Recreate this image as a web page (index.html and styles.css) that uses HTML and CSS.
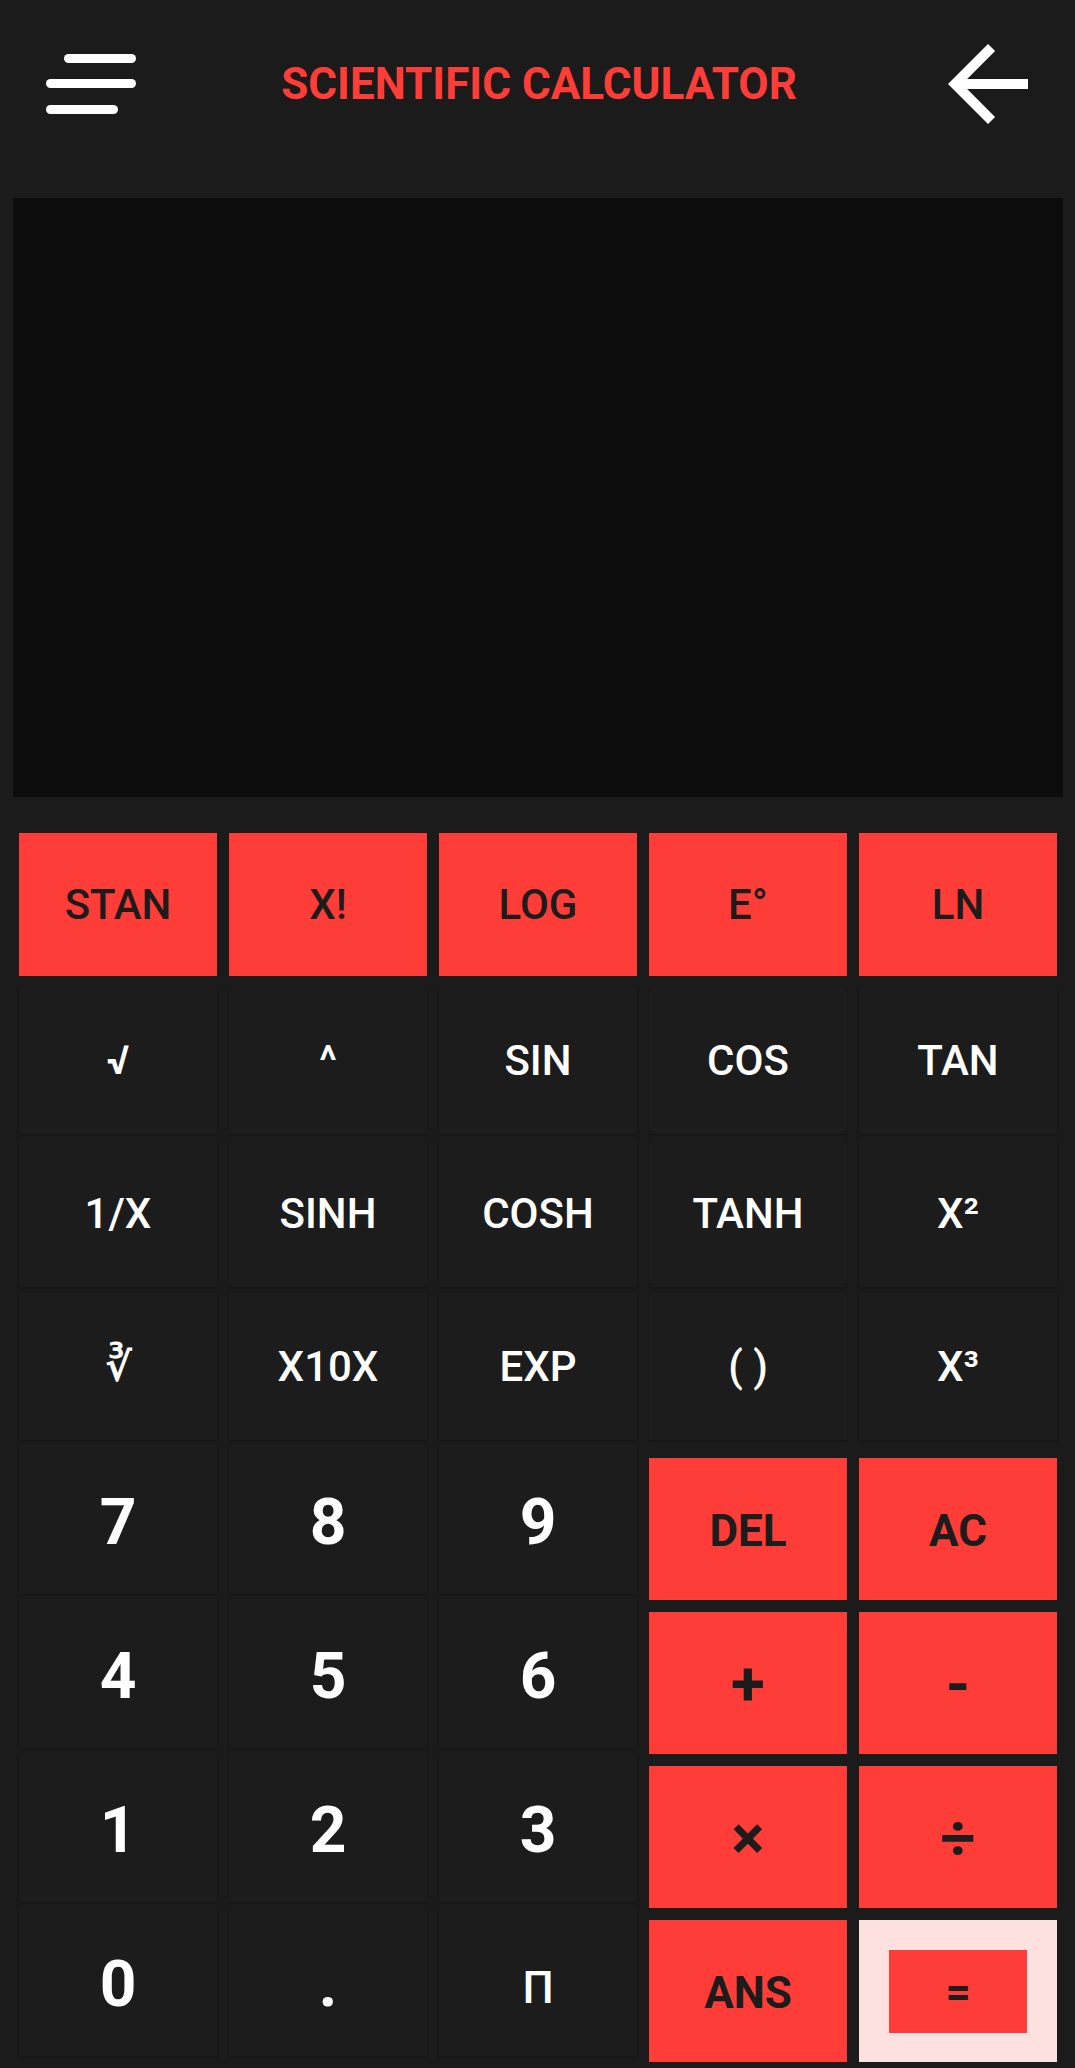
FILE: index.html
```html
<!DOCTYPE html>
<html>
<head>
    <title>Scientific Calculator</title>
    <link rel="stylesheet" href="styles.css">
</head>
<body>
    <div class="app">
        <div class="topbar">
            <svg class="menu-icon" width="90" height="60" viewBox="0 0 90 60">
                <g stroke="#fff" stroke-width="9" stroke-linecap="round">
                    <line x1="22.5" y1="4.5" x2="85.5" y2="4.5"/>
                    <line x1="4.5" y1="29.5" x2="85.5" y2="29.5"/>
                    <line x1="4.5" y1="55.5" x2="67.5" y2="55.5"/>
                </g>
            </svg>
            <div class="title">SCIENTIFIC CALCULATOR</div>
            <svg class="back-icon" width="80" height="80" viewBox="4 4 16 16">
                <path fill="#fff" d="M20 11H7.83l5.59-5.59L12 4l-8 8 8 8 1.41-1.41L7.83 13H20v-2z"/>
            </svg>
        </div>

        <div class="screen" id="output"></div>

        <div class="keys-top">
            <div class="key red">STAN</div>
            <div class="key red">X!</div>
            <div class="key red">LOG</div>
            <div class="key red">E°</div>
            <div class="key red">LN</div>

            <div class="key small-sym">√</div>
            <div class="key">^</div>
            <div class="key">SIN</div>
            <div class="key">COS</div>
            <div class="key">TAN</div>

            <div class="key">1/X</div>
            <div class="key">SINH</div>
            <div class="key">COSH</div>
            <div class="key">TANH</div>
            <div class="key">X²</div>

            <div class="key small-sym">∛</div>
            <div class="key">X10X</div>
            <div class="key">EXP</div>
            <div class="key">( )</div>
            <div class="key">X³</div>
        </div>

        <div class="keys-bottom">
            <div class="digits">
                <div class="key num">7</div>
                <div class="key num">8</div>
                <div class="key num">9</div>
                <div class="key num">4</div>
                <div class="key num">5</div>
                <div class="key num">6</div>
                <div class="key num">1</div>
                <div class="key num">2</div>
                <div class="key num">3</div>
                <div class="key num">0</div>
                <div class="key num">.</div>
                <div class="key pi">Π</div>
            </div>
            <div class="ops">
                <div class="key red bold">DEL</div>
                <div class="key red bold">AC</div>
                <div class="key red op">+</div>
                <div class="key red op">-</div>
                <div class="key red op">×</div>
                <div class="key red op">÷</div>
                <div class="key red bold">ANS</div>
                <div class="key pressed"><span class="inner">=</span></div>
            </div>
        </div>
    </div>
</body>
</html>
```

FILE: styles.css
```css
body {
    margin: 0;
    background-color: #1b1b1b;
    font-family: Roboto, "Liberation Sans", sans-serif;
}
.app {
    width: 1075px;
    height: 2068px;
    overflow: hidden;
}
.topbar {
    height: 168px;
    display: flex;
    align-items: center;
    justify-content: space-between;
    padding: 0 47px 0 46px;
}
.menu-icon,
.back-icon {
    display: block;
}
.title {
    color: #ff3d38;
    font-size: 44px;
    font-weight: 700;
    padding-right: 6px;
}
.screen {
    height: 599px;
    margin: 30px 12px 0 13px;
    background-color: #0c0c0c;
}
.keys-top {
    display: grid;
    grid-template-columns: repeat(5, 198px);
    grid-auto-rows: 148px;
    column-gap: 12px;
    row-gap: 5px;
    margin: 36px 0 0 19px;
}
.keys-bottom {
    display: flex;
    gap: 12px;
    margin: 5px 0 0 19px;
}
.digits {
    display: grid;
    grid-template-columns: repeat(3, 198px);
    grid-auto-rows: 149px;
    column-gap: 12px;
    row-gap: 5px;
}
.ops {
    display: grid;
    grid-template-columns: repeat(2, 198px);
    grid-auto-rows: 142px;
    gap: 12px;
    padding-top: 13px;
}
.key {
    display: flex;
    align-items: center;
    justify-content: center;
    background-color: #1c1c1c;
    box-shadow: 0 1px 2px rgba(0, 0, 0, 0.25);
    color: #fff;
    font-size: 42px;
    font-weight: 500;
}
.key.red {
    background-color: #ff3d38;
    color: #1c1c1c;
    box-shadow: none;
}
.keys-top .red {
    height: 143px;
    align-self: start;
}
.key.bold {
    font-weight: 700;
    font-size: 44px;
    padding-top: 3px;
}
.key.op {
    font-weight: 700;
    font-size: 62px;
}
.key.num {
    font-size: 64px;
    font-weight: 700;
    padding-top: 6px;
}
.key.pi {
    font-size: 44px;
    font-weight: 500;
    padding-top: 12px;
}
.key.small-sym {
    font-weight: 700;
    font-size: 40px;
}
.key.pressed {
    background-color: #fde1df;
    box-shadow: none;
    padding: 30px 30px 29px 30px;
}
.inner {
    flex: 1;
    align-self: stretch;
    display: flex;
    align-items: center;
    justify-content: center;
    background-color: #ff3d38;
    color: #1c1c1c;
    font-size: 44px;
    font-weight: 700;
}
```
